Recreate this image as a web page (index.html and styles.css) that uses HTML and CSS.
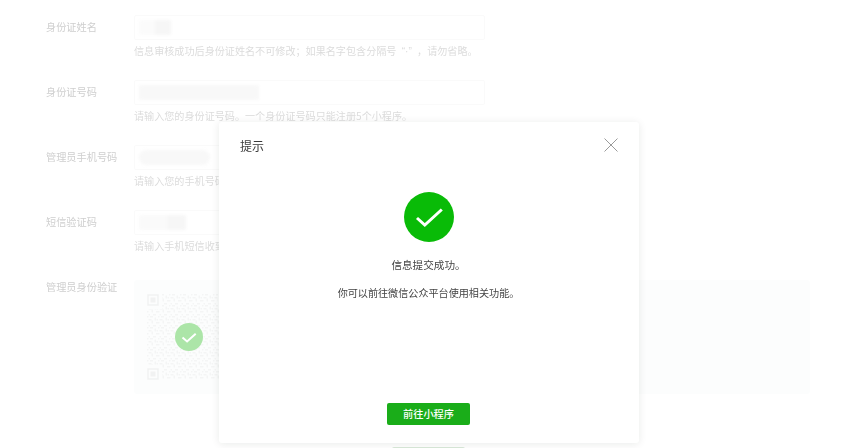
FILE: index.html
```html
<!DOCTYPE html>
<html lang="zh-CN">
<head>
<meta charset="utf-8">
<title>提示</title>
<link rel="stylesheet" href="styles.css">
</head>
<body>
<main class="form">
  <div class="row">
    <label class="label">身份证姓名</label>
    <div class="field">
      <div class="input"><span class="smudge smudge-name"></span></div>
      <p class="hint">信息审核成功后身份证姓名不可修改&#xFF1B;如果名字包含分隔号 <span class="latin">“·”</span> &#xFF0C;请勿省略。</p>
    </div>
  </div>
  <div class="row">
    <label class="label">身份证号码</label>
    <div class="field">
      <div class="input"><span class="smudge smudge-id"></span></div>
      <p class="hint">请输入您的身份证号码。一个身份证号码只能注册5个小程序。</p>
    </div>
  </div>
  <div class="row">
    <label class="label">管理员手机号码</label>
    <div class="field">
      <div class="input"><span class="smudge smudge-phone"></span></div>
      <p class="hint">请输入您的手机号码&#xFF0C;一个手机号码只能注册5个小程序。</p>
    </div>
  </div>
  <div class="row row-sms">
    <label class="label">短信验证码</label>
    <div class="field">
      <div class="input"><span class="smudge smudge-code"></span></div>
      <p class="hint">请输入手机短信收到的6位验证码。</p>
    </div>
  </div>
  <div class="row row-qr">
    <label class="label label-qr">管理员身份验证</label>
    <div class="qr-panel">
      <div class="qr">
        <svg class="qr-code" viewBox="0 0 86 86" aria-hidden="true">
          <defs>
            <pattern id="modules" width="11" height="11" patternUnits="userSpaceOnUse">
              <path d="M0 0h1.5v1.5H0zM3 0h3v1.5H3zM7.5 1.5H9v3H7.5zM1.5 3h3v1.5h-3zM0 6h1.5v1.5H0zM4.5 4.5H6v3H4.5zM9 6h2v1.5H9zM1.5 9H3v1.5H1.5zM6 9h3v1.5H6zM9.5 3H11v1.5H9.5z" fill="#f4f5f5"/>
            </pattern>
          </defs>
          <rect width="86" height="86" fill="url(#modules)"/>
          <g fill="#fcfdfd">
            <rect width="15" height="15"/><rect x="71" width="15" height="15"/><rect y="71" width="15" height="15"/>
          </g>
          <g fill="none" stroke="#f1f2f2" stroke-width="1.5">
            <rect x="1" y="1" width="10" height="10"/><rect x="75" y="1" width="10" height="10"/><rect x="1" y="75" width="10" height="10"/>
          </g>
          <g fill="#f1f2f2">
            <rect x="3.5" y="3.5" width="5" height="5"/><rect x="77.5" y="3.5" width="5" height="5"/><rect x="3.5" y="77.5" width="5" height="5"/>
          </g>
        </svg>
        <span class="qr-ok">
          <svg viewBox="0 0 28 28" aria-hidden="true"><path d="M7.5 14.5l4.6 4 8.6-7.8" fill="none" stroke="#fff" stroke-width="2"/></svg>
        </span>
      </div>
    </div>
  </div>
  <div class="page-action"><span class="page-button"></span></div>
</main>

<section class="dialog">
  <header class="dialog-head">
    <h1 class="dialog-title">提示</h1>
    <svg class="close" viewBox="0 0 14 14" aria-hidden="true"><path d="M.5.5l13 13M13.5.5l-13 13" fill="none" stroke="#9a9a9a" stroke-width="1"/></svg>
  </header>
  <div class="dialog-body">
    <span class="success">
      <svg viewBox="0 0 50 50" aria-hidden="true"><path d="M13 26l7.8 7 17-15.5" fill="none" stroke="#fff" stroke-width="3"/></svg>
    </span>
    <p class="msg msg-main">信息提交成功。</p>
    <p class="msg msg-sub">你可以前往微信公众平台使用相关功能。</p>
  </div>
  <footer class="dialog-foot">
    <button class="primary" type="button">前往小程序</button>
  </footer>
</section>
</body>
</html>
```

FILE: styles.css
```css
* { box-sizing: border-box; }

html, body {
  margin: 0;
  height: 448px;
  overflow: hidden;
  background: #fff;
  font-family: "Noto Sans CJK SC", "Noto Sans", sans-serif;
}

body { position: relative; }

.form {
  padding: 15px 0 0 46px;
  filter: blur(0.4px);
}

.row {
  display: flex;
  margin-bottom: 21px;
}

.row-sms { margin-bottom: 26px; }
.row-qr { margin-bottom: 53px; }

.label {
  width: 88px;
  flex: none;
  font-size: 10.2px;
  line-height: 23px;
  color: #cfcfcf;
}

.label-qr { line-height: 14px; }

.field { width: 351px; }

.input {
  height: 25px;
  border: 1px solid #fafafa;
  border-radius: 2px;
  padding: 4px 4px;
  display: flex;
  align-items: center;
}

.smudge {
  display: block;
  height: 15px;
  background: #f8f8f8;
  border-radius: 2px;
  filter: blur(1.5px);
}

.smudge-name { width: 32px; background: linear-gradient(90deg, #fbfbfb 50%, #f6f6f6 50%); }
.smudge-id { width: 120px; }
.smudge-phone { width: 71px; border-radius: 8px; }
.smudge-code { width: 47px; background: linear-gradient(90deg, #fafafa 60%, #f6f6f6 60%); }

.hint {
  height: 16px;
  margin: 3px 0 0;
  font-size: 10.1px;
  line-height: 16px;
  color: #dcdcdc;
  white-space: nowrap;
}

.latin {
  margin: 0 3px;
  font-family: "Liberation Sans", sans-serif;
}

.qr-panel {
  width: 676px;
  height: 114px;
  padding: 14px 13px;
  background: #fcfdfd;
  border-radius: 3px;
}

.qr {
  position: relative;
  width: 86px;
  height: 86px;
}

.qr-code {
  display: block;
  width: 86px;
  height: 86px;
}

.qr-ok {
  position: absolute;
  left: 28px;
  top: 29px;
  width: 28px;
  height: 28px;
  border-radius: 50%;
  background: #ace5a8;
}

.qr-ok svg, .success svg { display: block; width: 100%; height: 100%; }

.page-action {
  display: flex;
  padding-left: 346px;
}

.page-button {
  width: 73px;
  height: 22px;
  background: #d8e8d8;
  border-radius: 2px;
}

.dialog {
  position: absolute;
  left: 219px;
  top: 122px;
  width: 420px;
  height: 321px;
  padding-right: 1px;
  background: #fff;
  border-radius: 3px;
  box-shadow: 0 1px 8px rgba(0, 30, 20, 0.09);
  display: flex;
  flex-direction: column;
}

.dialog-head {
  display: flex;
  align-items: center;
  justify-content: space-between;
  height: 46px;
  padding: 0 20px 0 21px;
}

.dialog-title {
  margin: 0;
  font-size: 12px;
  font-weight: 400;
  color: #3a3a3a;
  filter: blur(0.25px);
}

.close { width: 14px; height: 14px; display: block; }

.dialog-body {
  flex: 1;
  display: flex;
  flex-direction: column;
  align-items: center;
  padding-top: 24px;
}

.success {
  display: block;
  width: 50px;
  height: 50px;
  border-radius: 50%;
  background: #09bb07;
}

.msg {
  margin: 0;
  font-size: 10.1px;
  line-height: 16px;
  color: #444;
  filter: blur(0.25px);
}

.msg-main { margin-top: 15px; font-size: 10.6px; }
.msg-sub { margin-top: 12px; }

.dialog-foot {
  display: flex;
  justify-content: center;
  padding-bottom: 18px;
}

.primary {
  width: 83px;
  height: 22px;
  padding: 0;
  border: 0;
  border-radius: 2px;
  background: #1aad19;
  color: #fff;
  font: 500 10.2px/22px "Noto Sans CJK SC", sans-serif;
}
```
